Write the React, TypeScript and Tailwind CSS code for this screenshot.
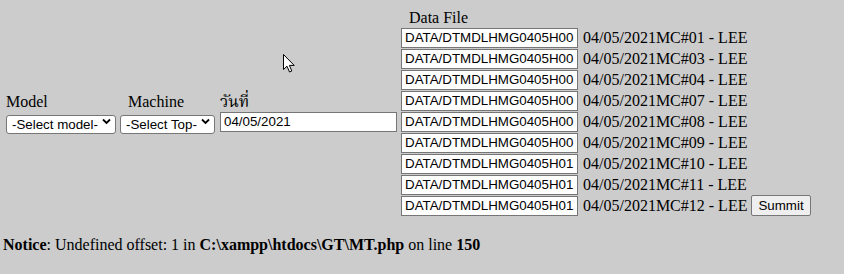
import React from 'react';

const files = [
  { path: 'DATA/DTMDLHMG0405H00', label: '04/05/2021MC#01 - LEE' },
  { path: 'DATA/DTMDLHMG0405H00', label: '04/05/2021MC#03 - LEE' },
  { path: 'DATA/DTMDLHMG0405H00', label: '04/05/2021MC#04 - LEE' },
  { path: 'DATA/DTMDLHMG0405H00', label: '04/05/2021MC#07 - LEE' },
  { path: 'DATA/DTMDLHMG0405H00', label: '04/05/2021MC#08 - LEE' },
  { path: 'DATA/DTMDLHMG0405H00', label: '04/05/2021MC#09 - LEE' },
  { path: 'DATA/DTMDLHMG0405H01', label: '04/05/2021MC#10 - LEE' },
  { path: 'DATA/DTMDLHMG0405H01', label: '04/05/2021MC#11 - LEE' },
  { path: 'DATA/DTMDLHMG0405H01', label: '04/05/2021MC#12 - LEE' },
];

// dropdown box with its own chevron so it looks the same everywhere
function Dropdown({ text, width }: { text: string; width: string }) {
  return (
    <div className={`relative h-[19px] ${width}`}>
      <select className="appearance-none w-full h-full bg-white border border-[#767676] rounded-[3px] pl-[5px] pr-[16px] text-[13.33px] leading-[17px] font-['Liberation_Sans',Arial,sans-serif] text-black">
        <option>{text}</option>
      </select>
      <svg className="absolute right-[5px] top-[6px] w-[9px] h-[7px] pointer-events-none" viewBox="0 0 9 7">
        <path d="M1 1.5 L4.5 5 L8 1.5" fill="none" stroke="#000" strokeWidth={1.8} />
      </svg>
    </div>
  );
}

export default function App() {
  return (
    <div className="relative w-[844px] h-[274px] bg-[#cccccc] text-black text-[16px] font-['Liberation_Serif','Noto_Sans',serif] overflow-hidden">
      {/* formulario */}
      <div className="flex items-center pl-[6px] pt-[8px]">
        <div className="flex flex-col w-[114px]">
          <span className="leading-[18px] h-[19px]">Model</span>
          <Dropdown text="-Select model-" width="w-[110px]" />
        </div>
        <div className="flex flex-col w-[100px]">
          <span className="leading-[18px] h-[19px] pl-[8px]">Machine</span>
          <Dropdown text="-Select Top-" width="w-[95px]" />
        </div>
        <div className="flex flex-col w-[181px]">
          <span className="leading-[18px] h-[19px] font-['Liberation_Serif','Noto_Serif_Thai','Noto_Sans_Thai',serif]">วันที่</span>
          <input
            defaultValue="04/05/2021"
            className="w-[177px] h-[20px] bg-white border border-[#767676] px-[3px] text-[13.33px] font-['Liberation_Sans',Arial,sans-serif] text-black"
          />
        </div>
        <div className="flex flex-col">
          <span className="leading-[18px] h-[19px] pl-[8px] pt-[1px]">Data File</span>
          {files.map((f, i) => (
            <div key={i} className="flex items-center h-[21px]">
              <input
                readOnly
                value={f.path}
                className="w-[177px] h-[20px] bg-white border border-[#767676] px-[3px] text-[13.33px] font-['Liberation_Sans',Arial,sans-serif] text-black"
              />
              <span className="ml-[5px] leading-[18px]">{f.label}</span>
              {i === files.length - 1 && (
                <button className="ml-[4px] h-[21px] px-[6px] bg-[#efefef] border border-[#767676] rounded-[2px] text-[13.33px] font-['Liberation_Sans',Arial,sans-serif] text-black">
                  Summit
                </button>
              )}
            </div>
          ))}
        </div>
      </div>

      <p className="pl-[3px] mt-[20px] leading-[18px]">
        <b>Notice</b>: Undefined offset: 1 in <b>C:\xampp\htdocs\GT\MT.php</b> on line <b>150</b>
      </p>

      {/* puntero del ratón */}
      <svg className="absolute left-[283px] top-[54px] w-[13px] h-[20px]" viewBox="0 0 13 20">
        <path d="M0.5 0.5 L0.5 15.5 L4 12.2 L6.5 18 L8.8 17 L6.4 11.4 L11.2 11.4 Z" fill="#fff" stroke="#000" strokeWidth={1} />
      </svg>
    </div>
  );
}
